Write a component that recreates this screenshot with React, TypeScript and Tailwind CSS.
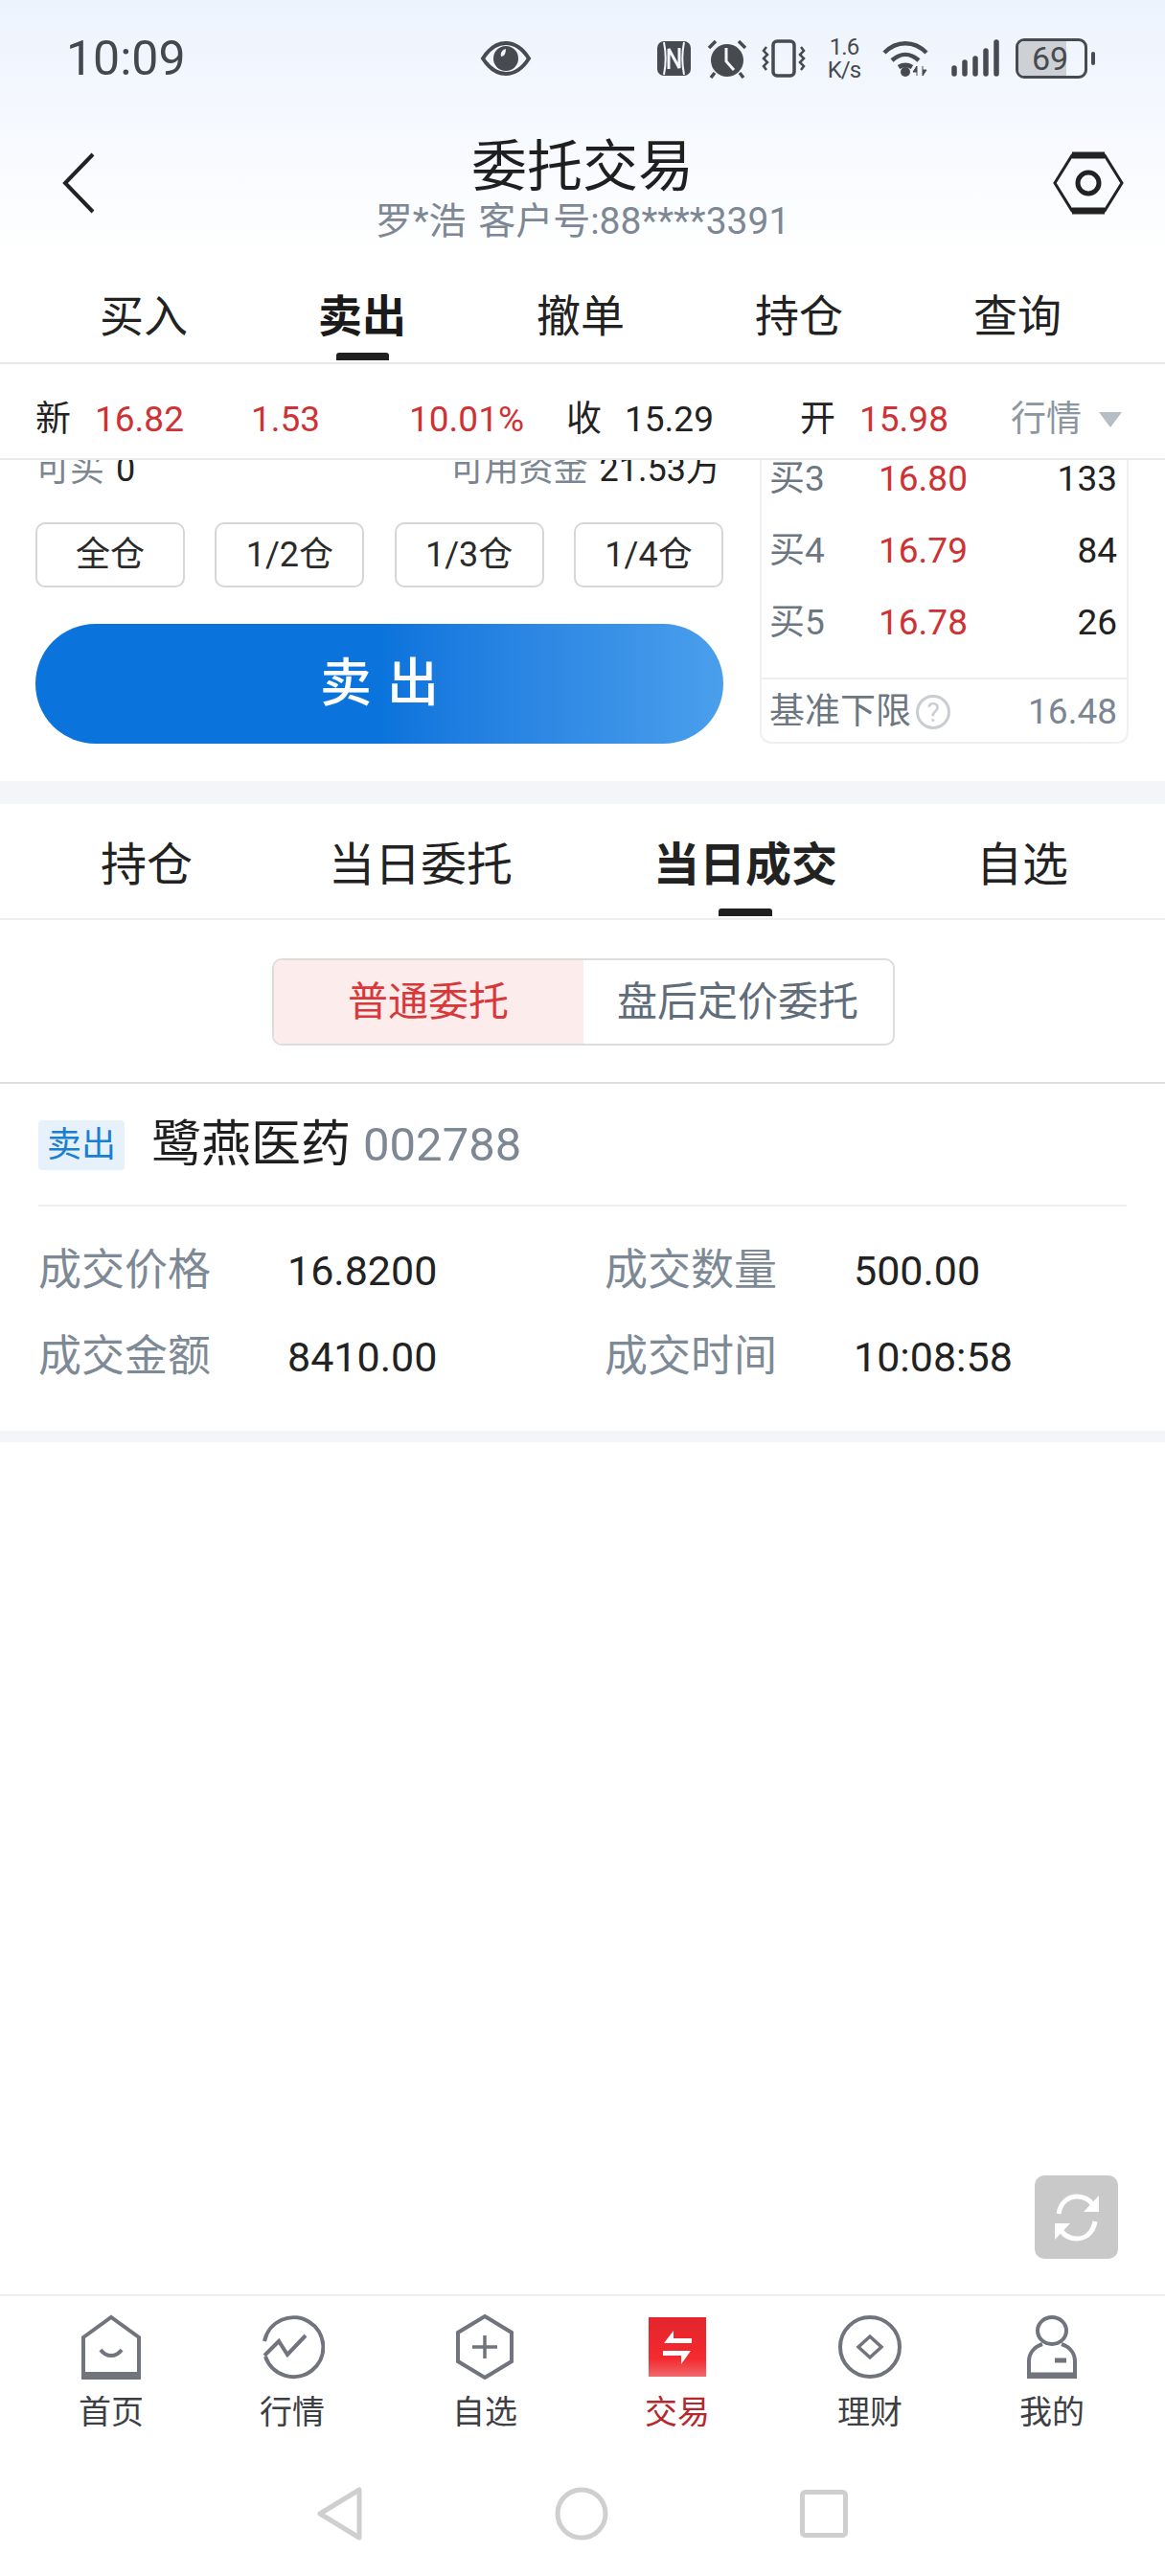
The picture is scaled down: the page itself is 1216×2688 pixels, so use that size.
import React from "react";

const F = { fontFamily: '"Roboto","Noto Sans CJK SC",sans-serif' };

function Eye() {
  return (
    <svg width="54" height="36" viewBox="0 0 54 36" className="ml-[310px]">
      <path d="M3 18C10 7 18 2 27 2s17 5 24 16c-7 11-15 16-24 16S10 29 3 18z" fill="none" stroke="#474b50" strokeWidth="4" />
      <circle cx="27" cy="18" r="13" fill="#474b50" />
      <path d="M27 8c-4 1-6 4-5 8 3 0 5-3 5-8z" fill="#f2f6fd" />
    </svg>
  );
}

function StatusIcons() {
  return (
    <div className="flex items-center ml-auto mr-[73px]">
      <svg width="37" height="38" viewBox="0 0 37 38">
        <rect x="1" y="1" width="35" height="36" rx="7" fill="#474b50" />
        <path d="M8 2c2 10 2 24 0 34M29 2c-2 10-2 24 0 34" stroke="#f2f6fd" strokeWidth="2" fill="none" />
        <path d="M13 30V9l11 20V8" stroke="#f2f6fd" strokeWidth="3" fill="none" />
      </svg>
      <svg width="44" height="42" viewBox="0 0 44 42" className="ml-[15px]">
        <circle cx="22" cy="23" r="17" fill="#474b50" />
        <path d="M21 10v14l8 9" stroke="#f2f6fd" strokeWidth="3" fill="none" />
        <path d="M3 10l7-7M41 10l-7-7M9 36l-4 5M35 36l4 5" stroke="#474b50" strokeWidth="3.5" fill="none" />
      </svg>
      <svg width="46" height="40" viewBox="0 0 46 40" className="ml-[14px]">
        <rect x="12" y="2" width="22" height="36" rx="4" fill="none" stroke="#474b50" strokeWidth="3.5" />
        <path d="M5 8l-3 4 4 4-4 4 4 4-4 4 3 4M41 8l3 4-4 4 4 4-4 4 4 4-3 4" fill="none" stroke="#474b50" strokeWidth="2.5" />
      </svg>
      <div className="ml-[19px] w-[42px] flex flex-col items-center text-[#474b50] text-[24px] leading-[24px] tracking-[-1px]" style={{ fontFamily: '"Roboto",sans-serif' }}>
        <span>1.6</span>
        <span>K/s</span>
      </div>
      <svg width="52" height="40" viewBox="0 0 52 40" className="ml-[18px]">
        <path d="M3 14C16 1 34 1 47 14M11 22c9-8 19-8 28 0M18 29c5-3 9-3 14 0" fill="none" stroke="#474b50" strokeWidth="4.5" />
        <circle cx="25" cy="34" r="5" fill="#474b50" />
        <path d="M37 38V28l-4 6h4M43 28v10l4-6h-4" fill="#474b50" stroke="#474b50" strokeWidth="1" />
      </svg>
      <svg width="50" height="40" viewBox="0 0 50 40" className="ml-[21px]">
        <path d="M3 30v6M14 24v12M25 20v16M36 12v24M47 3v33" stroke="#474b50" strokeWidth="5.5" strokeLinecap="round" />
      </svg>
      <div className="ml-[17px] relative w-[75px] h-[42px] rounded-[9px] border-[3px] border-[#474b50] overflow-hidden flex items-center">
        <div className="absolute left-0 top-0 bottom-0 w-[50px] bg-[#cdd0d4]"></div>
        <span className="relative w-[66px] text-center text-[34px] leading-[36px] text-[#474b50]" style={{ fontFamily: '"Roboto",sans-serif' }}>69</span>
      </div>
      <div className="ml-[4px] w-[4px] h-[14px] rounded-full bg-[#474b50]"></div>
    </div>
  );
}

function Stats() {
  const red = "text-[#cf3235]";
  return (
    <div className="h-[100px] flex items-center pt-[18px] pl-[37px] text-[37px] leading-[44px] text-[#222] border-b-2 border-[#eaeaea]">
      <span className="w-[62px]">新</span>
      <span className={`w-[163px] ${red}`}>16.82</span>
      <span className={`w-[165px] ${red}`}>1.53</span>
      <span className={`w-[164px] ${red}`}>10.01%</span>
      <span className="w-[61px]">收</span>
      <span className="w-[183px]">15.29</span>
      <span className="w-[62px]">开</span>
      <span className={`w-[158px] ${red}`}>15.98</span>
      <span className="w-[92px] text-[#8b96a0]">行情</span>
      <svg width="24" height="20" viewBox="0 0 24 20"><path d="M0 2h24L12 18z" fill="#b6bdc4" /></svg>
    </div>
  );
}

function Book({ name, price, qty }: { name: string; price: string; qty: string }) {
  return (
    <div className="h-[75px] flex items-center pl-[8px] pr-[10px] text-[37px]">
      <span className="w-[114px] text-[#6c7782]">{name}</span>
      <span className="text-[#cf3235]">{price}</span>
      <span className="ml-auto text-[#222]">{qty}</span>
    </div>
  );
}

function Trade() {
  const pct = ["全仓", "1/2仓", "1/3仓", "1/4仓"];
  return (
    <div className="h-[335px] overflow-hidden flex pl-[37px]">
      <div className="w-[718px]">
        <div className="-mt-[10px] h-[40px] flex items-center text-[36px] leading-[40px]">
          <span className="text-[#7b8692]">可买</span>
          <span className="ml-[12px] text-[#222]">0</span>
          <span className="ml-auto text-[#7b8692]">可用资金</span>
          <span className="ml-[12px] mr-[3px] text-[#222]">21.53万</span>
        </div>
        <div className="mt-[35px] flex justify-between">
          {pct.map((p) => (
            <div key={p} className="w-[156px] h-[68px] rounded-[10px] border-2 border-[#d6d6d6] flex items-center justify-center text-[36px] text-[#2a2a2a]">
              {p}
            </div>
          ))}
        </div>
        <div className="mt-[38px] h-[125px] rounded-full bg-gradient-to-r from-[#0a73dc] from-50% to-[#4a9fec] flex items-center justify-center text-white text-[54px] tracking-[16px] font-medium pl-[16px]">
          卖出
        </div>
      </div>
      <div className="ml-[38px] w-[385px] h-[314px] -mt-[18px] shrink-0 border-x-2 border-b-2 border-[#eef0f2] rounded-b-[12px]">
        <Book name="买3" price="16.80" qty="133" />
        <Book name="买4" price="16.79" qty="84" />
        <Book name="买5" price="16.78" qty="26" />
        <div className="mt-[20px] h-[69px] border-t-2 border-[#eceef0] flex items-center pl-[8px] pr-[10px] text-[37px] text-[#6c7782]">
          <span>基准下限</span>
          <svg width="38" height="38" viewBox="0 0 38 38" className="ml-[4px]">
            <circle cx="19" cy="19" r="16.5" fill="none" stroke="#c9cdd1" strokeWidth="3" />
            <text x="19" y="29" textAnchor="middle" fontSize="28" fill="#c9cdd1">?</text>
          </svg>
          <span className="ml-auto text-[#7b8692]">16.48</span>
        </div>
      </div>
    </div>
  );
}

function NavIcon({ i }: { i: number }) {
  const s = { fill: "none", stroke: "#71747d", strokeWidth: 4 };
  if (i === 0)
    return (
      <svg width="62" height="68" viewBox="0 0 62 68">
        <path d="M2 24L31 3l29 21v42H2z" {...s} strokeLinejoin="miter" />
        <path d="M2 63h58" stroke="#71747d" strokeWidth="6" />
        <path d="M20 37c6 8 16 8 22 0" {...s} />
      </svg>
    );
  if (i === 1)
    return (
      <svg width="68" height="68" viewBox="0 0 68 68">
        <path d="M5 28a31 31 0 1 1 1 16" {...s} />
        <path d="M5 43l15-15 9 14 19-20" {...s} />
      </svg>
    );
  if (i === 2)
    return (
      <svg width="62" height="70" viewBox="0 0 62 70">
        <path d="M31 3l28 17v30L31 67 3 50V20z" {...s} />
        <path d="M31 23v24M18 35h26" {...s} strokeWidth="3.5" />
      </svg>
    );
  if (i === 3)
    return (
      <svg width="60" height="62" viewBox="0 0 60 62">
        <defs>
          <linearGradient id="rd" x1="0" y1="0" x2="0" y2="1">
            <stop offset="0" stopColor="#e3252c" />
            <stop offset="0.7" stopColor="#f42a2f" />
            <stop offset="1" stopColor="#f0686c" />
          </linearGradient>
        </defs>
        <rect width="60" height="62" fill="url(#rd)" />
        <path d="M16 27l10-13v8h19v5zM44 35L34 49v-9H15v-5z" fill="#fff" />
      </svg>
    );
  if (i === 4)
    return (
      <svg width="68" height="68" viewBox="0 0 68 68">
        <circle cx="34" cy="34" r="31" {...s} />
        <path d="M34 23l12 11-12 11-12-11z" {...s} strokeWidth="3.5" />
      </svg>
    );
  return (
    <svg width="54" height="66" viewBox="0 0 54 66">
      <ellipse cx="27" cy="16" rx="15" ry="14" {...s} />
      <path d="M17 30C8 33 3 40 3 48v16h48V48c0-8-5-15-14-18" {...s} />
      <path d="M3 62h48" stroke="#71747d" strokeWidth="5" />
      <path d="M30 47h12" stroke="#71747d" strokeWidth="5" />
    </svg>
  );
}

function Nav() {
  const items: [string, number][] = [
    ["首页", 0],
    ["行情", 1],
    ["自选", 2],
    ["交易", 3],
    ["理财", 4],
    ["我的", 5],
  ];
  return (
    <div className="h-[122px] flex border-t-2 border-[#eeeeee] pt-[18px] pl-[56px]">
      {items.map(([t, i], idx) => (
        <div key={t} className={`w-[120px] flex flex-col items-center ${["", "ml-[69px]", "ml-[81px]", "ml-[81px]", "ml-[81px]", "ml-[70px]"][idx]}`}>
          <div className="h-[70px] shrink-0 flex items-center justify-center"><NavIcon i={i} /></div>
          <span className={`mt-[13px] text-[34px] leading-[40px] ${t === "交易" ? "text-[#b5282e]" : "text-[#3d3f45]"}`}>{t}</span>
        </div>
      ))}
    </div>
  );
}

export default function App() {
  return (
    <div className="w-[1216px] h-[2688px] bg-white flex flex-col overflow-hidden" style={F}>
      <div className="h-[270px] bg-gradient-to-b from-[#edf3fd] to-white">
        <div className="h-[124px] flex items-center pb-[2px] pl-[69px]">
          <span className="w-[122px] text-[50px] leading-[56px] text-[#44484d]">10:09</span>
          <Eye />
          <StatusIcons />
        </div>
        <div className="flex items-start justify-between px-[45px]">
          <div className="w-[140px] pl-[19px]">
            <svg width="36" height="64" viewBox="0 0 36 64" className="mt-[35px]">
              <path d="M33 2L4 32l29 30" fill="none" stroke="#222" strokeWidth="4" />
            </svg>
          </div>
          <div className="flex flex-col items-center">
            <span className="mt-[19px] text-[58px] leading-[62px] text-[#1f1f1f]">委托交易</span>
            <span className="mt-[4px] text-[39px] leading-[44px] text-[#7d8894]">罗*浩<span className="ml-[3px]"> </span>客户号:88****3391</span>
          </div>
          <div className="w-[140px] flex justify-end">
            <svg width="74" height="66" viewBox="0 0 74 66" className="mt-[34px] -mr-[2px]">
              <path d="M20 4h34l18 29-18 29H20L2 33z" fill="none" stroke="#222" strokeWidth="3" />
              <path d="M20 4h34M20 62h34" stroke="#222" strokeWidth="7" />
              <circle cx="37" cy="33" r="11" fill="none" stroke="#222" strokeWidth="5" />
            </svg>
          </div>
        </div>
      </div>

      <div className="h-[110px] flex border-b-2 border-[#e9e9e9] px-[36px]">
        {["买入", "卖出", "撤单", "持仓", "查询"].map((t, i) => (
          <div key={t} className="relative w-[228px] flex items-start justify-center text-[46px] leading-[60px] pt-[30px] text-[#222]">
            <span className={i === 1 ? "font-bold text-[#1a1a1a]" : ""}>{t}</span>
            {i === 1 && <div className="absolute bottom-[2px] left-[87px] w-[55px] h-[8px] bg-[#1f1f1f] rounded-t-[3px]"></div>}
          </div>
        ))}
      </div>

      <Stats />
      <Trade />
      <div className="h-[24px] bg-[#f3f5f9]"></div>

      <div className="h-[121px] flex border-b-2 border-[#eeeeee] pl-[105px]">
        {[
          ["持仓", "w-[96px]", ""],
          ["当日委托", "ml-[142px] w-[192px]", ""],
          ["当日成交", "ml-[147px] w-[192px]", "font-bold"],
          ["自选", "ml-[145px] w-[96px]", ""],
        ].map(([t, w, b], i) => (
          <div key={t} className={`relative ${w} flex justify-center whitespace-nowrap pt-[34px] text-[48px] leading-[60px] text-[#222] ${b}`}>
            {t}
            {i === 2 && <div className="absolute bottom-[2px] left-[68px] w-[56px] h-[8px] bg-[#1f1f1f] rounded-t-[3px]"></div>}
          </div>
        ))}
      </div>

      <div className="h-[171px] flex justify-center items-start pt-[40px] border-b-2 border-[#dedede]">
        <div className="w-[650px] h-[91px] flex rounded-[10px] border-2 border-[#dcdcdc] overflow-hidden ml-[1px] text-[42px]">
          <div className="w-[323px] bg-[#fdecec] flex items-center justify-center text-[#d8383a]">普通委托</div>
          <div className="flex-1 flex items-center justify-center text-[#5f6d7b]">盘后定价委托</div>
        </div>
      </div>

      <div className="h-[362px] px-[40px] pt-[38px]">
        <div className="h-[90px] flex items-start border-b-2 border-[#f0f0f0]">
          <div className="w-[90px] h-[52px] rounded-[4px] bg-[#e6f1fb] text-[#1a7fd0] text-[36px] flex items-center justify-center">卖出</div>
          <span className="ml-[28px] text-[52px] leading-[52px] text-[#1f1f1f]">鹭燕医药</span>
          <span className="ml-[13px] text-[49px] leading-[52px] text-[#7d8894]">002788</span>
        </div>
        <div className="mt-[39px] grid grid-cols-[260px_331px_1fr] gap-y-[34px] text-[45px] leading-[56px]">
          <span className="text-[#7d8a96]">成交价格</span>
          <span className="text-[#222] text-[43px]">16.8200</span>
          <div className="flex">
            <span className="w-[260px] text-[#7d8a96]">成交数量</span>
            <span className="text-[#222] text-[43px]">500.00</span>
          </div>
          <span className="text-[#7d8a96]">成交金额</span>
          <span className="text-[#222] text-[43px]">8410.00</span>
          <div className="flex">
            <span className="w-[260px] text-[#7d8a96]">成交时间</span>
            <span className="text-[#222] text-[43px]">10:08:58</span>
          </div>
        </div>
      </div>
      <div className="h-[12px] bg-[#f3f5f9]"></div>

      <div className="flex-1 flex justify-end items-end pr-[49px] pb-[37px]">
        <div className="w-[87px] h-[87px] rounded-[10px] bg-[#c9c9c9] flex items-center justify-center">
          <svg width="56" height="56" viewBox="0 0 56 56">
            <path d="M9 24C11 12 19 6 28 6c7 0 13 3 17 9" fill="none" stroke="#fff" strokeWidth="5" />
            <path d="M47 32c-2 12-10 18-19 18-7 0-13-3-17-9" fill="none" stroke="#fff" strokeWidth="5" />
            <path d="M51 5v17H35zM5 51V34h16z" fill="#fff" />
          </svg>
        </div>
      </div>

      <Nav />

      <div className="h-[172px]">
        <div className="flex items-start pl-[331px] pt-[79px]">
          <svg width="48" height="56" viewBox="0 0 48 56">
            <path d="M44 3v50L3 28z" fill="none" stroke="#cfcfcf" strokeWidth="5" strokeLinejoin="round" />
          </svg>
          <svg width="56" height="56" viewBox="0 0 56 56" className="ml-[200px]">
            <circle cx="28" cy="28" r="25" fill="none" stroke="#cfcfcf" strokeWidth="5" />
          </svg>
          <svg width="50" height="50" viewBox="0 0 50 50" className="ml-[200px] mt-[3px]">
            <rect x="2.5" y="2.5" width="45" height="45" rx="3" fill="none" stroke="#cfcfcf" strokeWidth="5" />
          </svg>
        </div>
      </div>
    </div>
  );
}
